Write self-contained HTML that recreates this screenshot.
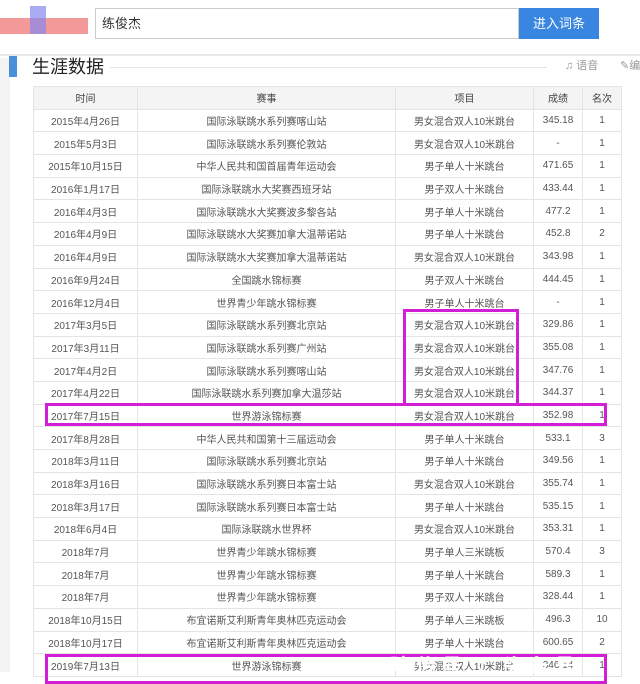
<!DOCTYPE html><html><head><meta charset="utf-8"><style>
body{margin:0;width:640px;height:672px;overflow:hidden;background:#fff;font-family:"Liberation Sans","Noto Sans CJK SC",sans-serif;position:relative}
.abs{position:absolute;white-space:nowrap}
table{position:absolute;left:33px;top:86px;border-collapse:collapse;table-layout:fixed;width:588px}
td,th{border:1px solid #e4e4e4;height:21.7px;padding:0;text-align:center;font-size:10px;color:#555;font-weight:normal;white-space:nowrap;overflow:hidden}
th{background:#f4f4f4;color:#444}
.box{position:absolute;border:3px solid #d21fd6;box-sizing:border-box}
</style></head><body>
<div class="abs" style="left:0;top:0;width:640px;height:54px;background:#fff;border-bottom:2px solid #e8e8e8"></div>
<div class="abs" style="left:0;top:18px;width:88px;height:16px;background:#f08080;opacity:.8"></div>
<div class="abs" style="left:30px;top:6px;width:16px;height:28px;background:#8888ee;opacity:.7"></div>
<div class="abs" style="left:95px;top:8px;width:424px;height:31px;border:1px solid #ccc;box-sizing:border-box;font-size:13px;line-height:29px;padding-left:6px;color:#333">练俊杰</div>
<div class="abs" style="left:519px;top:8px;width:80px;height:31px;background:#3886e0;color:#fff;font-size:13px;line-height:31px;text-align:center">进入词条</div>
<div class="abs" style="left:0;top:58px;width:10px;height:614px;background:#f3f3f3"></div>
<div class="abs" style="left:9px;top:56px;width:8px;height:21px;background:#4a90d9"></div>
<div class="abs" style="left:32px;top:53px;font-size:18px;color:#222">生涯数据</div>
<div class="abs" style="left:110px;top:67px;width:437px;height:1px;background:#e5e5e5"></div>
<div class="abs" style="left:565px;top:57px;font-size:11px;color:#999">♫ 语音</div>
<div class="abs" style="left:620px;top:57px;font-size:11px;color:#999">✎编</div>
<table>
<colgroup><col style="width:104px"><col style="width:258px"><col style="width:138px"><col style="width:49px"><col style="width:39px"></colgroup>
<tr><th>时间</th><th>赛事</th><th>项目</th><th>成绩</th><th>名次</th></tr>
<tr><td>2015年4月26日</td><td>国际泳联跳水系列赛喀山站</td><td>男女混合双人10米跳台</td><td>345.18</td><td>1</td></tr>
<tr><td>2015年5月3日</td><td>国际泳联跳水系列赛伦敦站</td><td>男女混合双人10米跳台</td><td>-</td><td>1</td></tr>
<tr><td>2015年10月15日</td><td>中华人民共和国首届青年运动会</td><td>男子单人十米跳台</td><td>471.65</td><td>1</td></tr>
<tr><td>2016年1月17日</td><td>国际泳联跳水大奖赛西班牙站</td><td>男子双人十米跳台</td><td>433.44</td><td>1</td></tr>
<tr><td>2016年4月3日</td><td>国际泳联跳水大奖赛波多黎各站</td><td>男子单人十米跳台</td><td>477.2</td><td>1</td></tr>
<tr><td>2016年4月9日</td><td>国际泳联跳水大奖赛加拿大温蒂诺站</td><td>男子单人十米跳台</td><td>452.8</td><td>2</td></tr>
<tr><td>2016年4月9日</td><td>国际泳联跳水大奖赛加拿大温蒂诺站</td><td>男女混合双人10米跳台</td><td>343.98</td><td>1</td></tr>
<tr><td>2016年9月24日</td><td>全国跳水锦标赛</td><td>男子双人十米跳台</td><td>444.45</td><td>1</td></tr>
<tr><td>2016年12月4日</td><td>世界青少年跳水锦标赛</td><td>男子单人十米跳台</td><td>-</td><td>1</td></tr>
<tr><td>2017年3月5日</td><td>国际泳联跳水系列赛北京站</td><td>男女混合双人10米跳台</td><td>329.86</td><td>1</td></tr>
<tr><td>2017年3月11日</td><td>国际泳联跳水系列赛广州站</td><td>男女混合双人10米跳台</td><td>355.08</td><td>1</td></tr>
<tr><td>2017年4月2日</td><td>国际泳联跳水系列赛喀山站</td><td>男女混合双人10米跳台</td><td>347.76</td><td>1</td></tr>
<tr><td>2017年4月22日</td><td>国际泳联跳水系列赛加拿大温莎站</td><td>男女混合双人10米跳台</td><td>344.37</td><td>1</td></tr>
<tr><td>2017年7月15日</td><td>世界游泳锦标赛</td><td>男女混合双人10米跳台</td><td>352.98</td><td>1</td></tr>
<tr><td>2017年8月28日</td><td>中华人民共和国第十三届运动会</td><td>男子单人十米跳台</td><td>533.1</td><td>3</td></tr>
<tr><td>2018年3月11日</td><td>国际泳联跳水系列赛北京站</td><td>男子单人十米跳台</td><td>349.56</td><td>1</td></tr>
<tr><td>2018年3月16日</td><td>国际泳联跳水系列赛日本富士站</td><td>男女混合双人10米跳台</td><td>355.74</td><td>1</td></tr>
<tr><td>2018年3月17日</td><td>国际泳联跳水系列赛日本富士站</td><td>男子单人十米跳台</td><td>535.15</td><td>1</td></tr>
<tr><td>2018年6月4日</td><td>国际泳联跳水世界杯</td><td>男女混合双人10米跳台</td><td>353.31</td><td>1</td></tr>
<tr><td>2018年7月</td><td>世界青少年跳水锦标赛</td><td>男子单人三米跳板</td><td>570.4</td><td>3</td></tr>
<tr><td>2018年7月</td><td>世界青少年跳水锦标赛</td><td>男子单人十米跳台</td><td>589.3</td><td>1</td></tr>
<tr><td>2018年7月</td><td>世界青少年跳水锦标赛</td><td>男子双人十米跳台</td><td>328.44</td><td>1</td></tr>
<tr><td>2018年10月15日</td><td>布宜诺斯艾利斯青年奥林匹克运动会</td><td>男子单人三米跳板</td><td>496.3</td><td>10</td></tr>
<tr><td>2018年10月17日</td><td>布宜诺斯艾利斯青年奥林匹克运动会</td><td>男子单人十米跳台</td><td>600.65</td><td>2</td></tr>
<tr><td>2019年7月13日</td><td>世界游泳锦标赛</td><td>男女混合双人10米跳台</td><td>346.14</td><td>1</td></tr>
</table>
<div class="box" style="left:403px;top:309px;width:116px;height:97px"></div>
<div class="box" style="left:45px;top:403px;width:562px;height:23px"></div>
<div class="box" style="left:45px;top:654px;width:562px;height:30px"></div>
<div class="abs" style="left:390px;top:650px;font-size:20px;color:#fff;font-weight:bold;letter-spacing:6px">陕传号 / 头条号</div>
</body></html>
